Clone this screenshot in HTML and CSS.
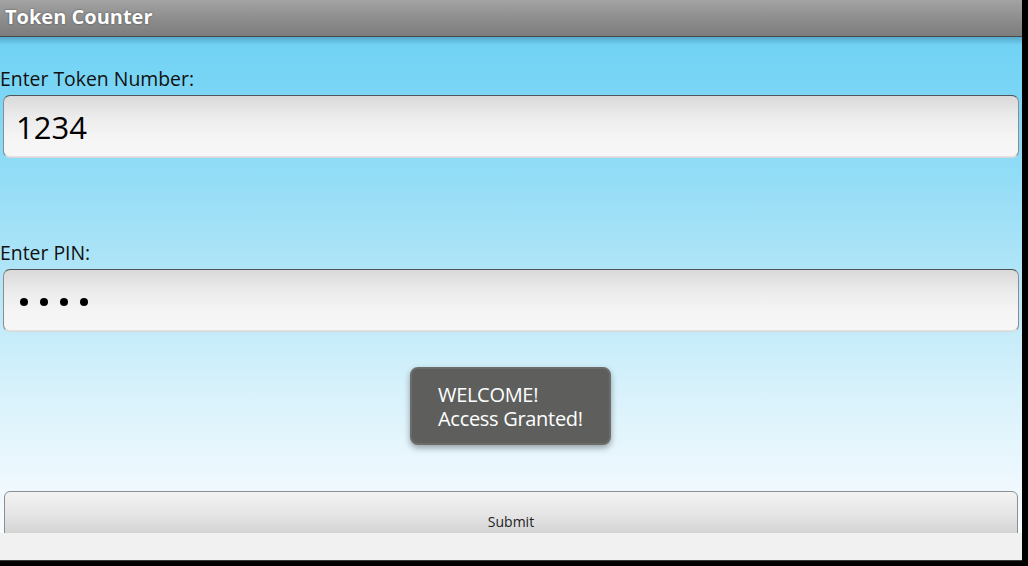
FILE: index.html
```html
<!DOCTYPE html>
<html>
<head>
<meta charset="utf-8">
<title>Token Counter</title>
<link rel="stylesheet" href="styles.css">
</head>
<body>
<div class="screen">
  <div class="titlebar">Token Counter</div>
  <div class="content">
    <label class="label label-first">Enter Token Number:</label>
    <div class="field"><span class="field-text">1234</span></div>
    <label class="label label-second">Enter PIN:</label>
    <div class="field field-pin">
      <span class="dot"></span><span class="dot"></span><span class="dot"></span><span class="dot"></span>
    </div>
    <div class="button-row"><div class="button">Submit</div></div>
    <div class="toast"><div class="toast-line">WELCOME!</div><div class="toast-line">Access Granted!</div></div>
  </div>
  <div class="bottombar"></div>
</div>
</body>
</html>
```

FILE: styles.css
```css
html, body {
  margin: 0;
  padding: 0;
  background: #000;
  width: 1028px;
  height: 566px;
  overflow: hidden;
}

.screen {
  width: 1022px;
  height: 560px;
  display: flex;
  flex-direction: column;
  overflow: hidden;
  font-family: "Open Sans", "DejaVu Sans", sans-serif;
  border-bottom: 1px solid #3a3a3a;
}

.titlebar {
  height: 37px;
  flex: 0 0 37px;
  box-sizing: border-box;
  padding-left: 5px;
  background: linear-gradient(#a3a3a3, #8a8a8a 60%, #7d7d7d);
  border-bottom: 1px solid #4a4a4a;
  color: #fff;
  font-weight: bold;
  font-size: 20px;
  line-height: 34px;
  text-shadow: 0 0 2px rgba(0,0,0,0.55);
}

.content {
  flex: 1 1 auto;
  min-height: 0;
  position: relative;
  overflow: hidden;
  display: flex;
  flex-direction: column;
  background:
    linear-gradient(rgba(40,90,120,0.35), rgba(40,90,120,0) 8px),
    linear-gradient(#70d2f5 0%, #7fd7f6 15%, #ade4f7 45%, #d6f1fb 70%, #f1f9fe 92%, #f6fbfe 100%);
}

.content > * { flex-shrink: 0; }

.label {
  display: block;
  font-size: 19.4px;
  line-height: 22px;
  color: #111;
  margin-left: 0;
}

.label-first { margin-top: 31px; }
.label-second { margin-top: 84px; }

.field {
  margin: 5px 3px 0 3px;
  height: 63px;
  box-sizing: border-box;
  border-radius: 7px;
  border: 1px solid #8c8c8c;
  border-top-color: #4e5458;
  border-bottom-color: #d8d8d8;
  background: linear-gradient(#d9d9d9, #ececec 35%, #f5f5f5 70%, #f7f7f7);
  box-shadow: inset 0 -1px 0 #e2e2e2;
  display: flex;
  align-items: center;
  padding-left: 12px;
}

.field-text {
  font-size: 31px;
  color: #000;
  line-height: 1;
  margin-top: 1px;
}

.field-pin {
  padding-left: 16px;
  gap: 12px;
}

.dot {
  width: 8px;
  height: 8px;
  border-radius: 50%;
  background: #000;
  margin-top: 2px;
}

.button-row {
  margin-top: 159px;
  padding: 0 4px;
}

.button {
  height: 56px;
  box-sizing: border-box;
  border-radius: 6px;
  border: 1px solid #8a8f92;
  background: linear-gradient(#f3f3f3, #e6e6e6 40%, #c8c8c8);
  text-align: center;
  font-size: 14px;
  color: #222;
  padding-top: 20px;
}

.toast {
  position: absolute;
  left: 410px;
  top: 330px;
  width: 201px;
  height: 78px;
  box-sizing: border-box;
  padding: 16px 0 0 26px;
  border-radius: 8px;
  background: #5e5f5d;
  border: 2px solid #6c6d6b;
  color: #fff;
  font-size: 20px;
  letter-spacing: -0.3px;
  box-shadow: 0 3px 6px rgba(0,0,0,0.35);
}

.toast-line {
  height: 24px;
  line-height: 20px;
}

.bottombar {
  flex: 0 0 27px;
  background: #f1f1f1;
}
```
